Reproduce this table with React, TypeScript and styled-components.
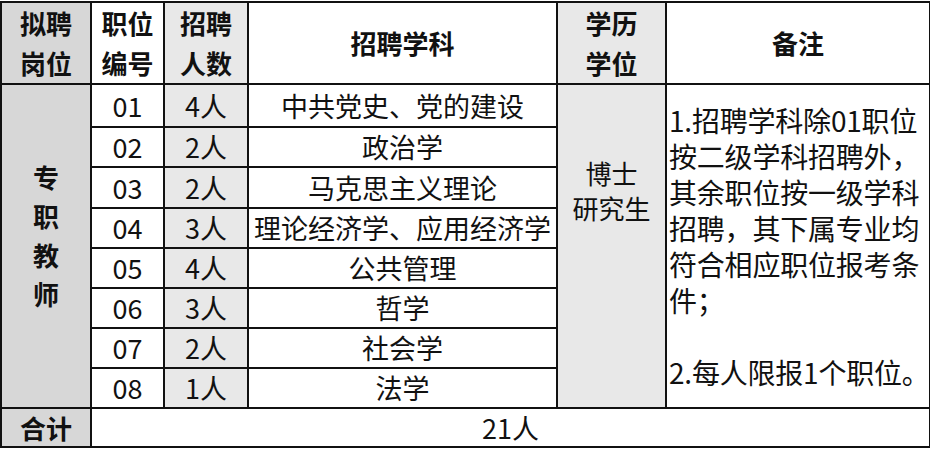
import styled, { createGlobalStyle } from 'styled-components';

const GlobalStyle = createGlobalStyle`
  html, body {
    margin: 0;
    padding: 0;
    background: #fff;
  }
  body {
    font-family: "Noto Sans CJK SC", "Microsoft YaHei", sans-serif;
    color: #111;
  }
`;

interface Post {
  code: string;
  count: string;
  subject: string;
}

const posts: Post[] = [
  { code: '01', count: '4人', subject: '中共党史、党的建设' },
  { code: '02', count: '2人', subject: '政治学' },
  { code: '03', count: '2人', subject: '马克思主义理论' },
  { code: '04', count: '3人', subject: '理论经济学、应用经济学' },
  { code: '05', count: '4人', subject: '公共管理' },
  { code: '06', count: '3人', subject: '哲学' },
  { code: '07', count: '2人', subject: '社会学' },
  { code: '08', count: '1人', subject: '法学' },
];

// 행 높이 (참고 이미지 기준)
const rowHeights = [43, 40, 41, 40, 40, 40, 40, 40];

const remarkLines = [
  '1.招聘学科除01职位',
  '按二级学科招聘外，',
  '其余职位按一级学科',
  '招聘，其下属专业均',
  '符合相应职位报考条',
  '件；',
  '',
  '2.每人限报1个职位。',
];

const App = () => {
  return (
    <>
      <GlobalStyle />
      <TableStyle>
        <colgroup>
          <col style={{ width: 90 }} />
          <col style={{ width: 73 }} />
          <col style={{ width: 84 }} />
          <col style={{ width: 309 }} />
          <col style={{ width: 109 }} />
          <col style={{ width: 264 }} />
        </colgroup>
        <thead>
          <HeadRow>
            <HeadCell $tone="dark">拟聘<br />岗位</HeadCell>
            <HeadCell $tone="white">职位<br />编号</HeadCell>
            <HeadCell $tone="light">招聘<br />人数</HeadCell>
            <HeadCell $tone="white">招聘学科</HeadCell>
            <HeadCell $tone="light">学历<br />学位</HeadCell>
            <HeadCell $tone="white">备注</HeadCell>
          </HeadRow>
        </thead>
        <tbody>
          {posts.map((post, index) => (
            <BodyRow key={post.code} style={{ height: rowHeights[index] }}>
              {index === 0 && (
                <PostCell rowSpan={posts.length}>
                  专<br />职<br />教<br />师
                </PostCell>
              )}
              <Cell $tone="white">{post.code}</Cell>
              <Cell $tone="light">{post.count}</Cell>
              <Cell $tone="white">{post.subject}</Cell>
              {index === 0 && (
                <DegreeCell rowSpan={posts.length}>
                  博士<br />研究生
                </DegreeCell>
              )}
              {index === 0 && (
                <RemarkCell rowSpan={posts.length}>
                  {remarkLines.map((line, i) => (
                    <RemarkLine key={i}>{line || '\u00a0'}</RemarkLine>
                  ))}
                </RemarkCell>
              )}
            </BodyRow>
          ))}
          <TotalRow>
            <TotalLabel>合计</TotalLabel>
            <Cell $tone="white" colSpan={5}>21人</Cell>
          </TotalRow>
        </tbody>
      </TableStyle>
    </>
  );
};

type Tone = 'dark' | 'light' | 'white';

const toneColor: Record<Tone, string> = {
  dark: '#d7d7d7',
  light: '#e8e8e8',
  white: '#ffffff',
};

const TableStyle = styled.table`
  margin-top: 1px;
  width: 929px;
  table-layout: fixed;
  border-collapse: collapse;
`;

const HeadRow = styled.tr`
  height: 82px;
`;

const BodyRow = styled.tr``;

const TotalRow = styled.tr`
  height: 39px;
`;

const HeadCell = styled.th<{ $tone: Tone }>`
  border: 2px solid #111;
  padding: 0;
  background: ${({ $tone }) => toneColor[$tone]};
  font-size: 26px;
  font-weight: 700;
  line-height: 40px;
  text-align: center;
  vertical-align: middle;
  color: #111;
`;

const TotalLabel = styled.th`
  border: 2px solid #111;
  padding: 0;
  background: ${toneColor.dark};
  font-size: 26px;
  font-weight: 700;
  line-height: 32px;
  text-align: center;
  vertical-align: middle;
  color: #111;
`;

const Cell = styled.td<{ $tone: Tone }>`
  border: 2px solid #111;
  padding: 0;
  background: ${({ $tone }) => toneColor[$tone]};
  font-size: 27px;
  font-weight: 400;
  line-height: 32px;
  text-align: center;
  vertical-align: middle;
  white-space: nowrap;
  overflow: hidden;
`;

const PostCell = styled.th`
  border: 2px solid #111;
  padding: 0 0 22px;
  background: ${toneColor.dark};
  font-size: 26px;
  font-weight: 700;
  line-height: 39px;
  text-align: center;
  vertical-align: middle;
  color: #111;
`;

const DegreeCell = styled.td`
  border: 2px solid #111;
  padding: 0 0 112px;
  background: ${toneColor.light};
  font-size: 26px;
  line-height: 35px;
  text-align: center;
  vertical-align: middle;
`;

const RemarkCell = styled.td`
  border: 2px solid #111;
  padding: 0 0 0 2px;
  background: #fff;
  font-size: 28px;
  line-height: 36px;
  text-align: left;
  vertical-align: middle;
`;

const RemarkLine = styled.div`
  white-space: nowrap;
  letter-spacing: -0.2px;
`;

export default App;
